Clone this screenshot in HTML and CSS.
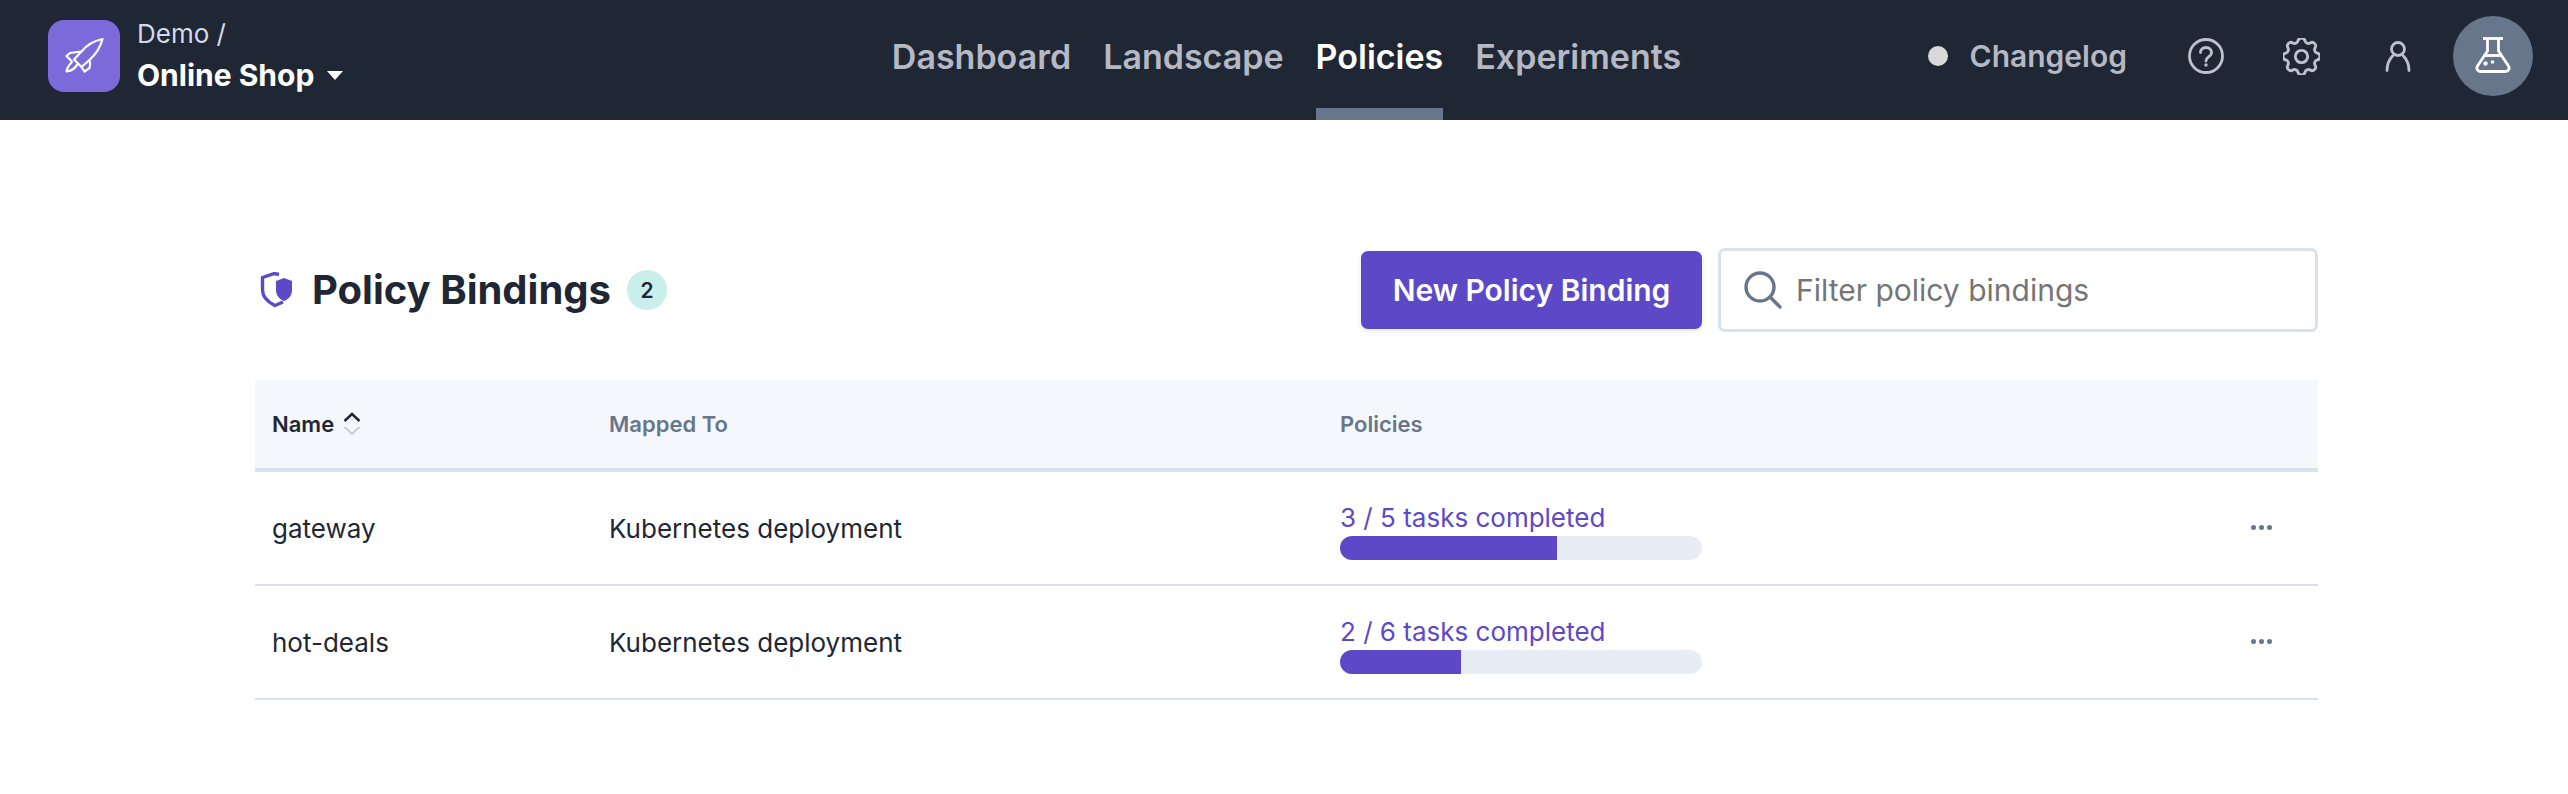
FILE: index.html
```html
<!DOCTYPE html>
<html lang="en">
<head>
<meta charset="utf-8">
<title>Policy Bindings</title>
<link rel="stylesheet" href="styles.css">
</head>
<body>
<header class="topbar">
  <div class="brand">
    <span class="brand-logo">
      <svg viewBox="0 0 72 72" width="72" height="72" fill="none" stroke="#fff" stroke-width="2.200" stroke-linejoin="round" stroke-linecap="round">
        <path d="M54.500 19c-7 1.500-15 5-21 12.500L26 39.500l7.500 7.500 8-7c6.500-6 11-13 13-21z"/>
        <path d="M33.500 31.500 22 33l-3.500 3 5 5"/>
        <path d="M41.500 40c1 3 1 5.500 0 8l-5 3.500-3-4.500"/>
        <path d="M24 42c-3 3-5 6-5.500 9.500 3-.2 7-1.500 10.500-6.500"/>
      </svg>
    </span>
    <div class="brand-text">
      <span class="brand-org">Demo /</span>
      <span class="brand-name">Online Shop <i class="caret"></i></span>
    </div>
  </div>
  <nav class="mainnav">
    <a class="navlink">Dashboard</a>
    <a class="navlink">Landscape</a>
    <a class="navlink active">Policies</a>
    <a class="navlink">Experiments</a>
  </nav>
  <div class="tools">
    <span class="dot"></span>
    <span class="changelog">Changelog</span>
    <svg class="tool help" viewBox="0 0 36 36" width="36" height="36" fill="none" stroke="#bcc1cb" stroke-width="2.800">
      <circle cx="18" cy="18" r="16.500"/>
      <path d="M12.500 14.500c0-3 2.400-5 5.500-5s5.500 2 5.500 5c0 2.500-1.600 3.500-3.200 4.600-1.500 1-2.300 2-2.300 3.900" stroke-linecap="round"/>
      <circle cx="18" cy="27" r="1.700" fill="#bcc1cb" stroke="none"/>
    </svg>
    <svg class="tool gear" viewBox="3 3 18 18" width="37" height="37" fill="none" stroke="#bcc1cb" stroke-width="1.400" stroke-linejoin="round">
      <path d="M10.325 4.317c.426-1.756 2.924-1.756 3.350 0a1.724 1.724 0 002.573 1.066c1.543-.94 3.310.826 2.370 2.370a1.724 1.724 0 001.065 2.572c1.756.426 1.756 2.924 0 3.350a1.724 1.724 0 00-1.066 2.573c.94 1.543-.826 3.310-2.370 2.370a1.724 1.724 0 00-2.572 1.065c-.426 1.756-2.924 1.756-3.350 0a1.724 1.724 0 00-2.573-1.066c-1.543.94-3.310-.826-2.370-2.370a1.724 1.724 0 00-1.065-2.572c-1.756-.426-1.756-2.924 0-3.350a1.724 1.724 0 001.066-2.573c-.94-1.543.826-3.310 2.370-2.370.996.608 2.296.07 2.572-1.065z"/>
      <path d="M15 12a3 3 0 11-6 0 3 3 0 016 0z"/>
    </svg>
    <svg class="tool person" viewBox="0 0 26 32" width="26" height="32" fill="none" stroke="#bcc1cb" stroke-width="2.800" stroke-linecap="round">
      <circle cx="13" cy="9" r="6.500"/>
      <path d="M2 30.500c0-7 2.500-11.500 6-15M24 30.500c0-7-2.500-11.500-6-15"/>
    </svg>
    <span class="avatar">
      <svg class="flask" viewBox="0 0 36 36" width="36" height="36" fill="none" stroke="#fff" stroke-width="2.800" stroke-linejoin="round">
        <path d="M8 1.500h20"/>
        <path d="M12.500 1.500V14L2.500 29c-1.500 2.500 0 5.500 3 5.500h25c3 0 4.500-3 3-5.500L23.500 14V1.500"/>
        <path d="M9.500 18.500h17"/>
        <circle cx="10.500" cy="26.500" r="2.200" fill="#fff" stroke="none"/>
        <circle cx="17.500" cy="25" r="1.800" fill="#fff" stroke="none"/>
      </svg>
    </span>
  </div>
</header>
<main class="page">
  <div class="pagehead">
    <div class="title">
      <svg class="shield" viewBox="0 0 32 36" width="32" height="36">
        <path d="M19 2.500 14.500 1.500 2.500 5.500V18c0 6 4 11 11.500 15l1 .5 8-3.500" fill="none" stroke="#5d49c8" stroke-width="3.400" stroke-linejoin="round"/>
        <path d="M24 6l8 3v9c0 5-3 9-8 11-5-2-8-6-8-11V9z" fill="#5d49c8"/>
      </svg>
      <h1>Policy Bindings</h1>
      <span class="count">2</span>
    </div>
    <div class="actions">
      <button class="primary">New Policy Binding</button>
      <label class="filter">
        <svg viewBox="0 0 38 38" width="38" height="38" fill="none" stroke="#67768a" stroke-width="3.400" stroke-linecap="round">
          <circle cx="16" cy="16" r="14"/>
          <path d="M26 26 36 36"/>
        </svg>
        <span>Filter policy bindings</span>
      </label>
    </div>
  </div>
  <div class="table">
    <div class="row head">
      <div class="name sorted">Name
        <svg class="sort" viewBox="0 0 18 24" width="18" height="24" fill="none" stroke-width="2.400">
          <path d="M1.500 9 9 2l7.500 7" stroke="#1f2735"/>
          <path d="M1.500 15 9 22l7.500-7" stroke="#c5cad2" stroke-width="1.800"/>
        </svg>
      </div>
      <div class="mapped">Mapped To</div>
      <div class="policies">Policies</div>
    </div>
    <div class="row">
      <div class="name">gateway</div>
      <div class="mapped">Kubernetes deployment</div>
      <div class="policies">
        <div class="tasks">3 / 5 tasks completed</div>
        <div class="track"><div class="fill" style="width:60%"></div></div>
      </div>
      <div class="more"><i></i><i></i><i></i></div>
    </div>
    <div class="row">
      <div class="name">hot-deals</div>
      <div class="mapped">Kubernetes deployment</div>
      <div class="policies">
        <div class="tasks">2 / 6 tasks completed</div>
        <div class="track"><div class="fill" style="width:33.33%"></div></div>
      </div>
      <div class="more"><i></i><i></i><i></i></div>
    </div>
  </div>
</main>
</body>
</html>
```

FILE: styles.css
```css
* { box-sizing: border-box; }
html, body { margin: 0; padding: 0; background: #fff; }
body { font-family: Inter, "Liberation Sans", sans-serif; color: #1f2735; }

.topbar {
  height: 120px;
  background: #1f2735;
  display: grid;
  grid-template-columns: 1fr auto 1fr;
  grid-template-rows: 112px;
  align-items: center;
  padding: 0 35px 8px 48px;
}
.brand { display: flex; align-items: center; gap: 17px; }
.brand-logo {
  width: 72px; height: 72px; border-radius: 16px;
  background: #7c6adb;
  display: flex; align-items: center; justify-content: center;
}
.brand-text { display: flex; flex-direction: column; gap: 9px; margin-top: -2px; }
.brand-org { font-size: 26px; line-height: 30px; color: #d5dbe6; }
.brand-name { font-size: 30px; line-height: 34px; font-weight: 700; color: #fff; display: flex; align-items: center; gap: 13px; }
.caret { width: 0; height: 0; border-left: 8.500px solid transparent; border-right: 8.500px solid transparent; border-top: 9px solid #fff; margin-top: 2px; }

.mainnav { display: flex; gap: 32px; height: 120px; align-self: start; margin-right: 8px; }
.navlink {
  font-size: 34px; font-weight: 600; color: #b4b9c4;
  height: 120px; line-height: 114px;
}
.navlink.active { color: #fff; border-bottom: 12px solid #67768a; }

.tools { display: flex; align-items: center; justify-content: flex-end; }
.dot { width: 20px; height: 20px; border-radius: 50%; background: #d9d9d9; margin-right: 22px; }
.changelog { font-size: 30px; font-weight: 600; color: #b4b9c4; margin-right: 61px; }
.tool { display: block; }
.help { margin-right: 59px; }
.gear { margin-right: 65px; }
.person { margin-right: 42px; }
.avatar {
  width: 80px; height: 80px; border-radius: 50%;
  background: #67768a;
  display: flex; align-items: center; justify-content: center;
}
.flask { margin-bottom: 2px; }

.page { padding: 128px 250px 0 255px; }
.pagehead { display: flex; align-items: center; justify-content: space-between; height: 84px; }
.title { display: flex; align-items: center; }
.shield { margin: 0 20px 0 5px; }
h1 { margin: 0; font-size: 40px; line-height: 48px; font-weight: 700; color: #1f2735; }
.count {
  width: 40px; height: 40px; border-radius: 50%;
  background: #c9eeeb; color: #1f2735;
  font-size: 21px; font-weight: 600;
  display: flex; align-items: center; justify-content: center;
  margin-left: 16px;
}
.actions { display: flex; align-items: center; gap: 16px; }
.primary {
  width: 341px; height: 78px; border: 0; border-radius: 7px;
  background: #5d49c8; color: #fff;
  font: 600 30px Inter, "Liberation Sans", sans-serif;
  box-shadow: 0 2px 5px rgba(31, 39, 53, .12);
}
.filter {
  width: 600px; height: 84px;
  border: 3px solid #d9e2ec; border-radius: 7px;
  display: flex; align-items: center; gap: 14px;
  padding-left: 23px;
  font-size: 30px; color: #757575;
}

.table { margin-top: 48px; }
.row {
  display: grid;
  grid-template-columns: 354px 731px 1fr 100px;
  align-items: center;
  height: 114px;
  font-size: 26px;
  border-bottom: 2px solid #d9e2ec;
}
.row.head {
  height: 92px;
  background: #f4f7fb;
  border-bottom: 4px solid #d9e2ec;
  font-size: 22px; font-weight: 600; color: #67768a;
}
.name { padding-left: 17px; }
.sorted { color: #1f2735; display: flex; align-items: center; gap: 9px; }
.policies { padding-top: 3px; }
.head .policies { padding-top: 0; }
.tasks { font-size: 26px; line-height: 36px; color: #5d49c8; }
.track { width: 362px; height: 24px; border-radius: 12px; background: #e8ecf4; overflow: hidden; }
.fill { height: 100%; background: #5d49c8; }
.more { display: flex; gap: 3px; align-items: center; justify-content: flex-end; padding-right: 46px; padding-bottom: 2px; }
.more i { width: 5px; height: 5px; border-radius: 50%; background: #67768a; }
```
